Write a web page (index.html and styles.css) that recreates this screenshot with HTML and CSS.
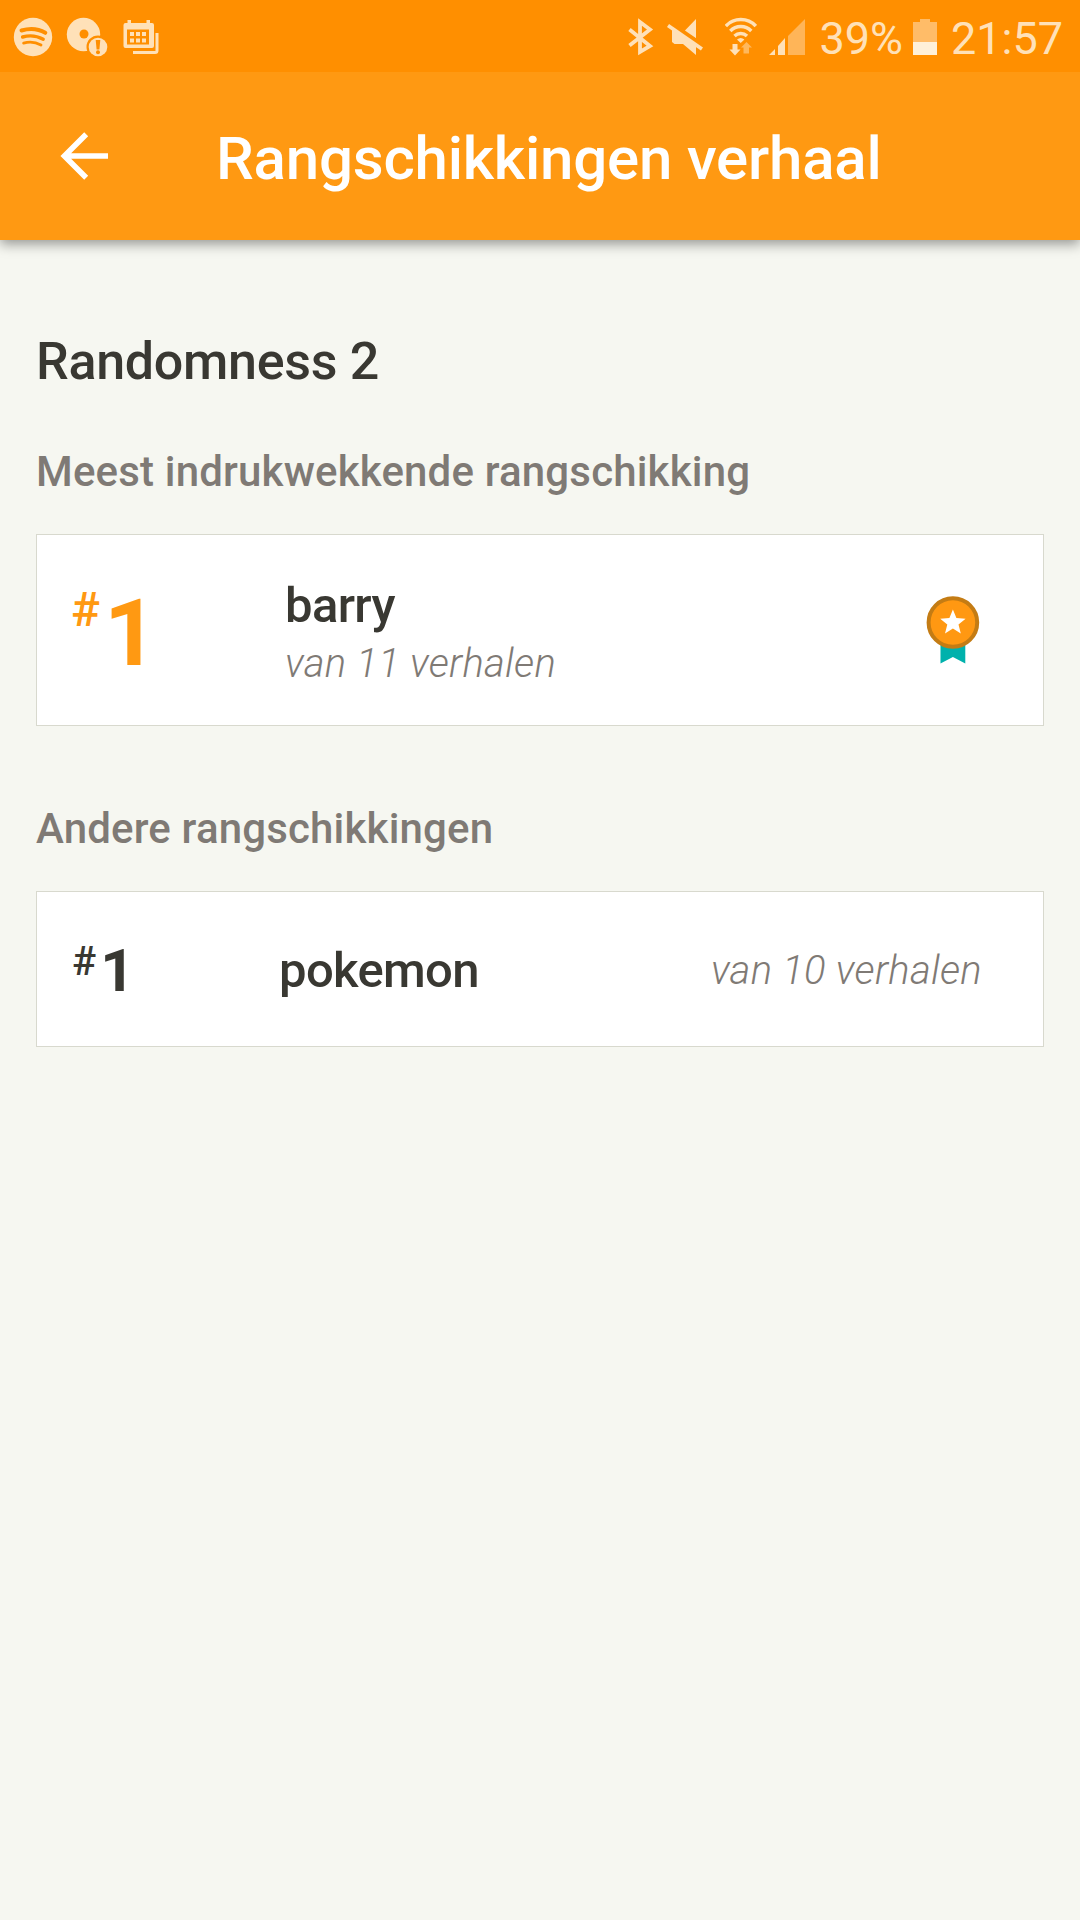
FILE: index.html
```html
<!DOCTYPE html>
<html lang="nl">
<head>
<meta charset="utf-8">
<title>Rangschikkingen verhaal</title>
<link rel="stylesheet" href="styles.css">
</head>
<body>
<div class="statusbar">
  <svg class="ic spotify" width="40" height="72" viewBox="13 0 40 72"><circle cx="33" cy="37" r="19.2" fill="#ffe1b8"/><g fill="none" stroke="#ff8f00" stroke-linecap="round"><path d="M21.5 30.5C29 28.3 38.500 28.800 45.300 32.800" stroke-width="4"/><path d="M22.600 37C29.500 35 37 35.800 43.200 39.200" stroke-width="3.400"/><path d="M23.600 43.100C29.500 41.400 35.500 42 41 45" stroke-width="2.800"/></g></svg>
  <svg class="ic disc" width="42" height="72" viewBox="66 0 42 72"><circle cx="83.500" cy="34.500" r="16.700" fill="#ffe1b8"/><circle cx="84" cy="34" r="4.500" fill="#ff8f00"/><circle cx="98" cy="47" r="11.500" fill="#ff8f00"/><circle cx="98" cy="47" r="9.300" fill="#ffe1b8"/><path d="M95.700 40h4.600l-.9 9.500h-2.800z" fill="#ff8f00"/><circle cx="98" cy="52.300" r="2" fill="#ff8f00"/></svg>
  <svg class="ic calendar" width="36" height="72" viewBox="123 0 36 72"><path fill="#ffe1b8" fill-rule="evenodd" d="M127.500 20h3.500v3h15.500v-3h3.500v3h2a2 2 0 0 1 2 2v21a2 2 0 0 1-2 2h-26.500a2 2 0 0 1-2-2v-21a2 2 0 0 1 2-2h2zM127 29.500v15h22v-15z"/><path fill="#ffe1b8" d="M130 32h4v4h-4zM136 32h4v4h-4zM142 32h4v4h-4zM130 38.500h4v4h-4zM136 38.500h4v4h-4zM142 38.500h4v4h-4z"/><path d="M157 33v17.500a2 2 0 0 1-2 2h-22" fill="none" stroke="#ffe1b8" stroke-width="3"/></svg>
  <span class="spacer"></span>
  <svg class="ic bt" width="26" height="72" viewBox="628 0 26 72"><path d="M629.500 29.500l20.500 16.500-10 6v-30l10 7.500-20.500 16" fill="none" stroke="#ffe1b8" stroke-width="3.800"/></svg>
  <svg class="ic mute" width="36" height="72" viewBox="667 0 36 72"><path d="M696 19v19.500L684 31.500zM672 28h8l16 14v13l-13-11h-8.500l-2.500-2z" fill="#ffe1b8"/><path d="M668 25.500L702 49" stroke="#ff8f00" stroke-width="5" transform="translate(1 -3)"/><path d="M668 25.500L702 49" stroke="#ffe1b8" stroke-width="3.800"/></svg>
  <svg class="ic wifi" width="32" height="72" viewBox="725 0 32 72"><g fill="none" stroke="#ffe1b8" stroke-width="3.400"><path d="M725.800 26a20.500 20.500 0 0 1 30 0"/><path d="M730.300 31a14.500 14.500 0 0 1 21 0"/><path d="M734.500 36a9 9 0 0 1 12.500 0"/></g><path d="M737 39.500q3.700-3 7.400 0L740.700 43z" fill="#ffe1b8"/><path d="M732.500 44h5v5.500h3L735 55.500l-5.500-6h3z" fill="#ffe1b8"/><path d="M743.500 53.500v-6h-2.500l5.500-5.500 5.500 5.500h-3v6z" fill="#ffb85c"/></svg>
  <svg class="ic signal" width="37" height="72" viewBox="769 0 37 72"><path d="M769 55l6-6v6zM778 55V46l7-8v17z" fill="#ffe1b8"/><path d="M788 55V36L805 19v36z" fill="#ffb558"/></svg>
  <span class="pct">39%</span>
  <svg class="ic battery" width="24" height="72" viewBox="912 0 24 72"><path d="M912 22h7v-3h10v3h7v20h-24z" fill="#ffbc68"/><path d="M912 42h24v13h-24z" fill="#fff0d8"/></svg>
  <span class="clock">21:57</span>
</div>
<header class="appbar">
  <svg class="back" width="50" height="52" viewBox="59 130 50 52"><path d="M108 156H64.400M86.200 134.200L64.400 156l21.800 21.800" fill="none" stroke="#fff" stroke-width="5.600"/></svg>
  <div class="title">Rangschikkingen verhaal</div>
</header>
<main class="content">
  <h1>Randomness 2</h1>
  <h2>Meest indrukwekkende rangschikking</h2>
  <section class="card best">
    <div class="rank"><span class="hash">#</span><span class="num">1</span></div>
    <div class="info"><div class="name">barry</div><div class="total">van 11 verhalen</div></div>
    <svg class="medal" width="54" height="70" viewBox="926.500 594 54 70"><path d="M941 640h24.800v22.500l-12.400-6.500-12.400 6.500z" fill="#00b1ac"/><circle cx="953.400" cy="621.500" r="24.300" fill="#ff9812" stroke="#c47c14" stroke-width="4"/><path d="M953.400 608.500l3.500 8.600 9.200.6-7.100 5.900 2.300 8.900-7.900-4.900-7.900 4.900 2.300-8.900-7.100-5.900 9.200-.6z" fill="#fff"/></svg>
  </section>
  <h2 class="others">Andere rangschikkingen</h2>
  <section class="card other">
    <div class="rank"><span class="hash">#</span><span class="num">1</span></div>
    <div class="name">pokemon</div>
    <div class="total">van 10 verhalen</div>
  </section>
</main>
</body>
</html>
```
FILE: styles.css
```css
* { box-sizing: border-box; }
body { margin: 0; min-height: 1920px; background: #f6f7f1; font-family: Roboto, sans-serif; color: #393832; }
svg { display: block; flex: none; }
.statusbar { position: relative; z-index: 1; height: 72px; display: flex; align-items: center; background: #ff8f00; color: #ffe1b8; font-size: 45px; line-height: 48px; padding: 0 17px 0 13px; white-space: nowrap; }
.disc { margin-left: 13px; }
.calendar { margin-left: 15px; }
.spacer { flex: 1; }
.mute { margin-left: 13px; }
.wifi { margin-left: 22px; }
.signal { margin-left: 12px; }
.pct { margin-left: 13px; padding-top: 6px; }
.battery { margin-left: 10px; }
.clock { margin-left: 14px; padding-top: 6px; }
.appbar { position: relative; height: 168px; display: flex; align-items: center; padding-left: 59px; background: #ff9912; box-shadow: 0 4px 12px rgba(0, 0, 0, .4); }
.title { margin-left: 107px; padding-top: 5px; font-size: 60px; font-weight: 500; line-height: 70px; letter-spacing: -.2px; color: #fff; white-space: nowrap; }
.content { padding: 92px 36px 0; }
h1 { margin: 0; font-size: 52px; line-height: 60px; font-weight: 500; letter-spacing: -.3px; }
h2 { margin: 55px 0 37px; font-size: 42px; line-height: 50px; font-weight: 500; letter-spacing: .17px; color: #7f7a75; }
h2.others { margin-top: 78px; }
.card { display: grid; align-items: start; background: #fff; border: 1px solid #d8d9ce; }
.best { height: 192px; grid-template-columns: 214px 1fr 54px; padding: 42px 63px 0 34px; }
.other { height: 156px; grid-template-columns: 207px 1fr auto; padding: 0 61px 0 35px; }
.rank { display: flex; align-items: flex-start; }
.name { font-size: 49px; font-weight: 500; line-height: 58px; letter-spacing: -.65px; }
.total { font-size: 40px; font-weight: 300; font-style: italic; line-height: 58px; letter-spacing: .3px; color: #7f7a75; }
.best .rank { color: #ff9912; padding-top: 5px; }
.best .hash { font-size: 48px; line-height: 56px; font-weight: 500; }
.best .num { margin-left: 4px; font-size: 93px; line-height: 100px; font-weight: 700; padding-top: 2px; }
.best .medal { margin-top: 18px; }
.other .hash { font-size: 40px; line-height: 48px; margin-top: 46px; font-weight: 500; }
.other .num { margin-left: 4px; font-size: 60px; line-height: 68px; margin-top: 45px; font-weight: 700; }
.other .name { margin-top: 50px; }
.other .total { margin-top: 50px; }
```
